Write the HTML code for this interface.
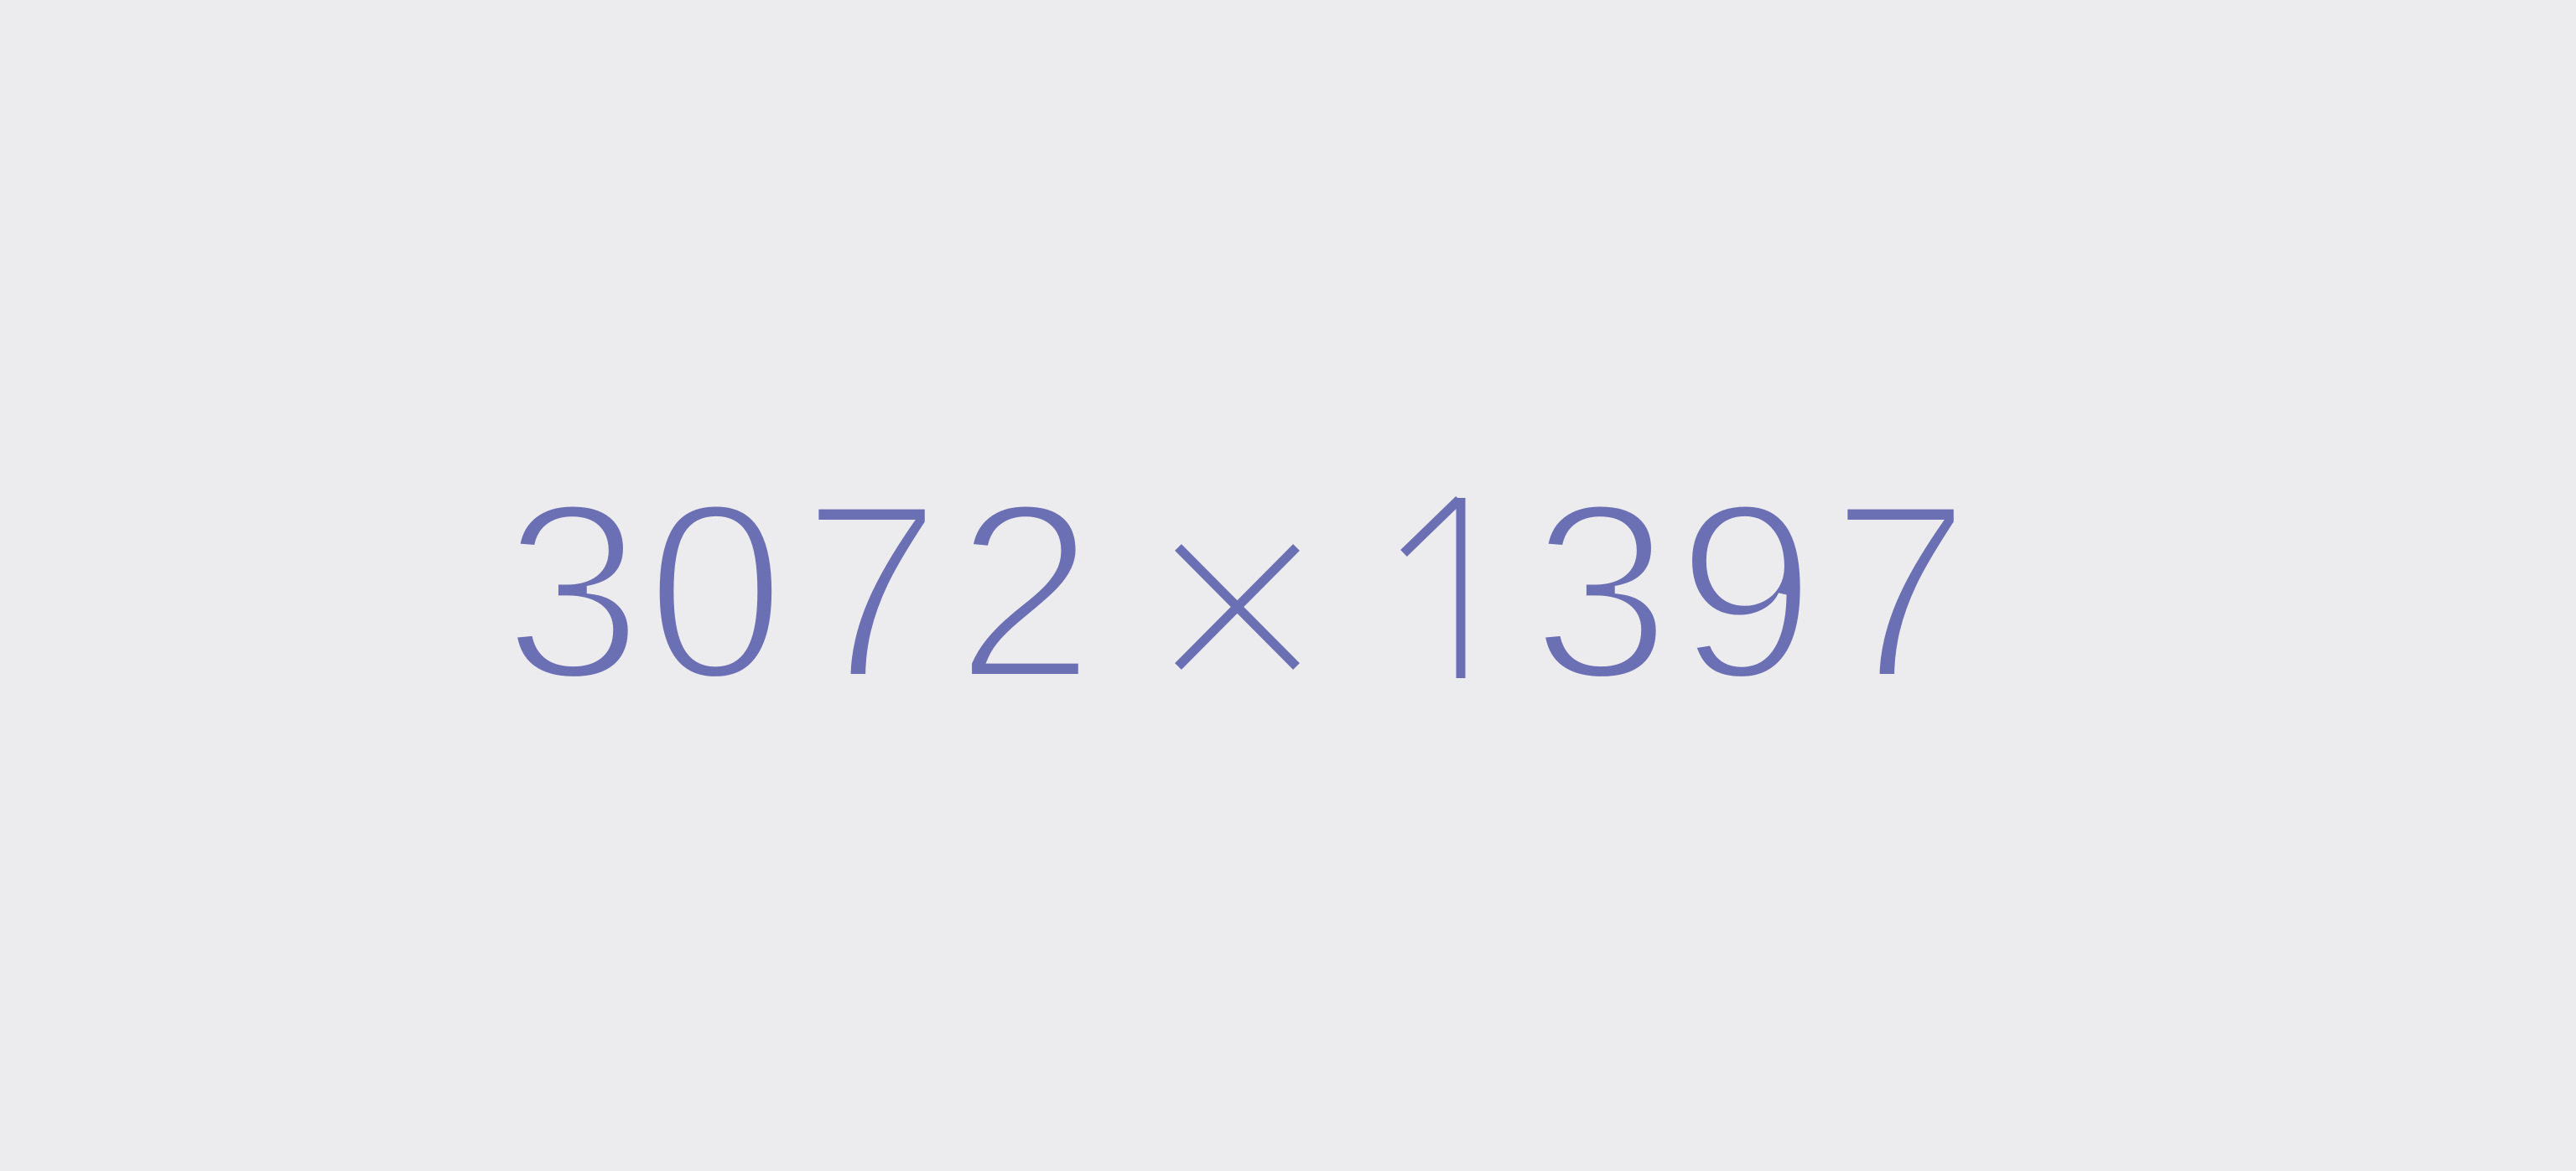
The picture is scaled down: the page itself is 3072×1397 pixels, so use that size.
<!DOCTYPE html>
<html><head><meta charset="utf-8"><style>
html,body{margin:0;padding:0;width:3072px;height:1397px;background:#ecebee;overflow:hidden}
.c{position:absolute;top:555px;font-family:"Liberation Sans",sans-serif;font-size:300px;line-height:300px;color:#6b6fb3;white-space:pre;-webkit-text-stroke:10px #ecebee}
svg{position:absolute;left:0;top:0}
</style></head><body>
<span class="c" style="left:600px">3</span>
<span class="c" style="left:770px">0</span>
<span class="c" style="left:956px">7</span>
<span class="c" style="left:1139px">2</span>
<span class="c" style="left:1826px">3</span>
<span class="c" style="left:1999px">9</span>
<span class="c" style="left:2183px">7</span>
<svg width="3072" height="1397" viewBox="0 0 3072 1397">
<g stroke="#6b6fb3" stroke-width="11" fill="none">
<line x1="1405" y1="653" x2="1546" y2="795"/>
<line x1="1546" y1="653" x2="1405" y2="795"/>
<line x1="1742" y1="594" x2="1742" y2="809"/>
<line x1="1740" y1="596" x2="1674" y2="660"/>
</g>
</svg>
</body></html>
